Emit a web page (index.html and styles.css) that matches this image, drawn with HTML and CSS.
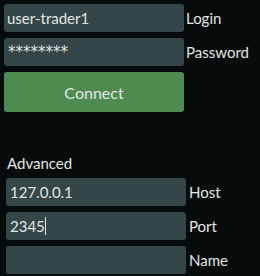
FILE: index.html
```html
<!DOCTYPE html>
<html>
<head>
<meta charset="utf-8">
<link rel="stylesheet" href="styles.css">
</head>
<body>
<div class="page">
  <div class="form top">
    <div class="field">user-trader1</div>
    <div class="label">Login</div>
    <div class="field masked">********</div>
    <div class="label">Password</div>
    <div class="button">Connect</div>
  </div>
  <div class="section-title">Advanced</div>
  <div class="form bottom">
    <div class="field">127.0.0.1</div>
    <div class="label">Host</div>
    <div class="field">2345<span class="caret"></span></div>
    <div class="label">Port</div>
    <div class="field"></div>
    <div class="label">Name</div>
  </div>
</div>
</body>
</html>
```

FILE: styles.css
```css
html, body {
  margin: 0;
  padding: 0;
  background: #060b0b;
}
body {
  width: 260px;
  height: 276px;
  overflow: hidden;
  font-family: Lato, "DejaVu Sans", sans-serif;
  font-size: 15px;
  color: #e2e6e4;
}
.page {
  padding: 4px;
}
.form {
  display: grid;
  grid-template-columns: 180px auto;
  row-gap: 6px;
  column-gap: 2px;
  grid-auto-rows: 28px;
}
.top {
  grid-template-rows: 28px 28px 40px;
}
.field {
  background: #344647;
  border-radius: 3px;
  display: flex;
  align-items: center;
  padding-left: 3px;
  line-height: 18px;
}
.masked {
  font-family: "DejaVu Sans", sans-serif;
  font-size: 15px;
  padding-left: 4px;
}
.label {
  display: flex;
  align-items: center;
}
.button {
  grid-column: 1;
  background: #4f8a51;
  border-radius: 3px;
  display: flex;
  align-items: center;
  justify-content: center;
  font-size: 16px;
}
.section-title {
  margin-top: 43px;
  padding-left: 3px;
  line-height: 17px;
  height: 17px;
  margin-bottom: 6px;
}
.bottom {
  padding-left: 2px;
  column-gap: 3px;
}
.bottom .field {
  padding-left: 4px;
}
.caret {
  display: inline-block;
  width: 1px;
  height: 18px;
  background: #e2e6e4;
}
```
